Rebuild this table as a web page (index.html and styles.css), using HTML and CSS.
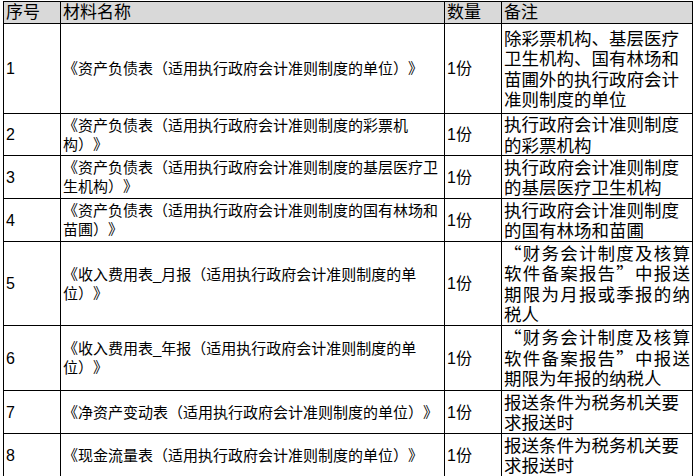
FILE: index.html
```html
<!DOCTYPE html>
<html lang="zh-CN">
<head>
<meta charset="utf-8">
<link rel="stylesheet" href="styles.css">
</head>
<body>
<div class="wrap">
<table class="grid">
  <colgroup>
    <col class="c-no"><col class="c-name"><col class="c-qty"><col class="c-note">
  </colgroup>
  <thead>
    <tr class="h-head">
      <th>序号</th><th>材料名称</th><th>数量</th><th>备注</th>
    </tr>
  </thead>
  <tbody>
    <tr class="h-90">
      <td class="no">1</td>
      <td class="name">《资产负债表（适用执行政府会计准则制度的单位）》</td>
      <td class="qty">1份</td>
      <td class="note"><span class="ln">除彩票机构、基层医疗</span><span class="ln">卫生机构、国有林场和</span><span class="ln">苗圃外的执行政府会计</span><span class="ln">准则制度的单位</span></td>
    </tr>
    <tr class="h-39">
      <td class="no">2</td>
      <td class="name">《资产负债表（适用执行政府会计准则制度的彩票机<br>构）》</td>
      <td class="qty">1份</td>
      <td class="note"><span class="ln">执行政府会计准则制度</span><span class="ln">的彩票机构</span></td>
    </tr>
    <tr class="h-43">
      <td class="no">3</td>
      <td class="name">《资产负债表（适用执行政府会计准则制度的基层医疗卫<br>生机构）》</td>
      <td class="qty">1份</td>
      <td class="note"><span class="ln">执行政府会计准则制度</span><span class="ln">的基层医疗卫生机构</span></td>
    </tr>
    <tr class="h-43">
      <td class="no">4</td>
      <td class="name">《资产负债表（适用执行政府会计准则制度的国有林场和<br>苗圃）》</td>
      <td class="qty">1份</td>
      <td class="note"><span class="ln">执行政府会计准则制度</span><span class="ln">的国有林场和苗圃</span></td>
    </tr>
    <tr class="h-84">
      <td class="no">5</td>
      <td class="name">《收入费用表_月报（适用执行政府会计准则制度的单<br>位）》</td>
      <td class="qty">1份</td>
      <td class="note"><span class="ln just">“财务会计制度及核算</span><span class="ln just">软件备案报告”中报送</span><span class="ln just">期限为月报或季报的纳</span><span class="ln">税人</span></td>
    </tr>
    <tr class="h-65">
      <td class="no">6</td>
      <td class="name">《收入费用表_年报（适用执行政府会计准则制度的单<br>位）》</td>
      <td class="qty">1份</td>
      <td class="note"><span class="ln just">“财务会计制度及核算</span><span class="ln just">软件备案报告”中报送</span><span class="ln">期限为年报的纳税人</span></td>
    </tr>
    <tr class="h-43">
      <td class="no">7</td>
      <td class="name">《净资产变动表（适用执行政府会计准则制度的单位）》</td>
      <td class="qty">1份</td>
      <td class="note"><span class="ln">报送条件为税务机关要</span><span class="ln">求报送时</span></td>
    </tr>
    <tr class="h-43">
      <td class="no">8</td>
      <td class="name">《现金流量表（适用执行政府会计准则制度的单位）》</td>
      <td class="qty">1份</td>
      <td class="note"><span class="ln">报送条件为税务机关要</span><span class="ln">求报送时</span></td>
    </tr>
  </tbody>
</table>
</div>
</body>
</html>
```

FILE: styles.css
```css
html, body {
  margin: 0;
  padding: 0;
  background: #ffffff;
}
.wrap {
  padding: 1px 0 0 3px;
}
.grid {
  border-collapse: collapse;
  table-layout: fixed;
  width: 690px;
  font-family: "Liberation Sans", "Noto Sans CJK SC", sans-serif;
  color: #000;
  text-spacing-trim: space-all;
}
.c-no { width: 57px; }
.c-name { width: 384px; }
.c-qty { width: 57px; }
.c-note { width: 191px; }
.grid th, .grid td {
  border: 1px solid #000;
  padding: 0 2px;
  vertical-align: middle;
  text-align: left;
}
.grid th {
  background: #d9d9d9;
  font-weight: normal;
  font-size: 17px;
  line-height: 20px;
  padding-top: 0;
  padding-bottom: 0;
  white-space: nowrap;
}
.h-head { height: 22px; }
.h-90 { height: 90px; }
.h-39 { height: 39px; }
.h-43 { height: 43px; }
.h-84 { height: 84px; }
.h-65 { height: 65px; }
.no {
  font-size: 16px;
  line-height: 19px;
}
.name {
  font-size: 15px;
  line-height: 19px;
  white-space: nowrap;
}
.qty {
  font-size: 16px;
  line-height: 19px;
  white-space: nowrap;
}
.note {
  font-family: "Noto Sans CJK SC", sans-serif;
  font-size: 17.5px;
  line-height: 20.5px;
}
.ln {
  display: block;
  white-space: nowrap;
}
.just {
  text-align: justify;
  text-align-last: justify;
  white-space: normal;
}
```
